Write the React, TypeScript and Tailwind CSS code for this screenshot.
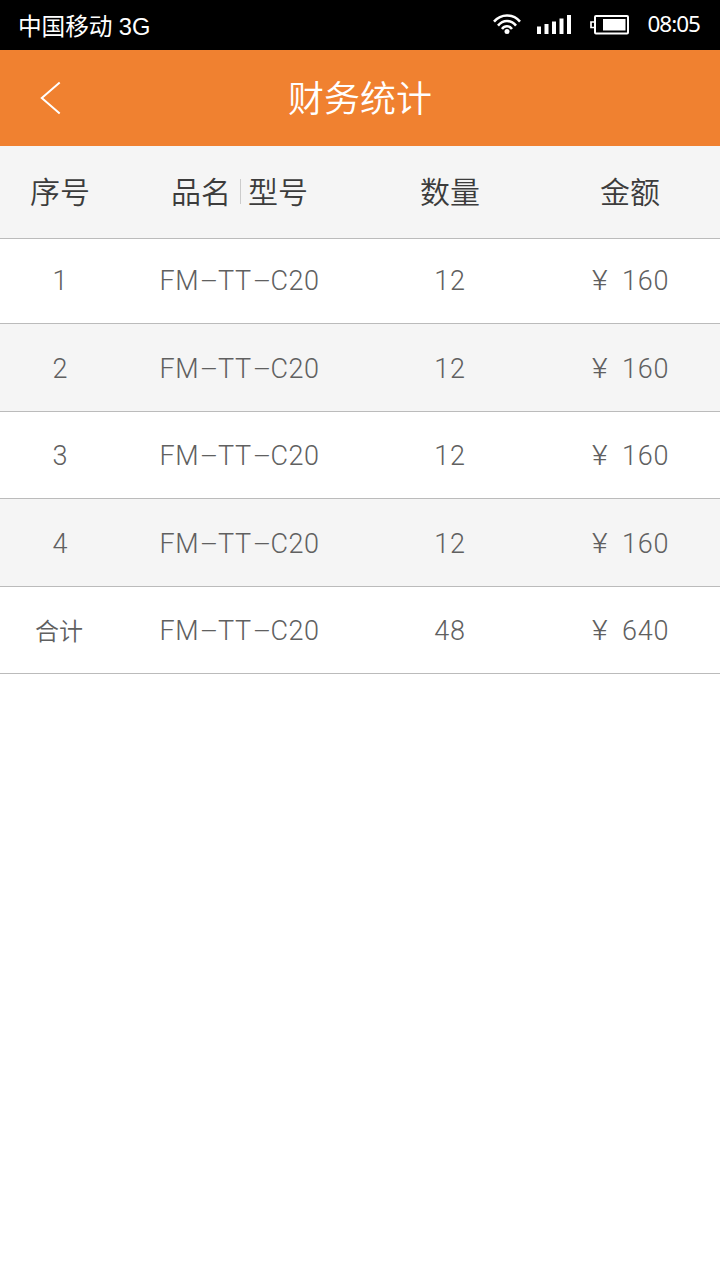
const rows = [
  { no: '1', model: 'FM-TT-C20', qty: '12', amount: '160', height: 'h-[85px]' },
  { no: '2', model: 'FM-TT-C20', qty: '12', amount: '160', height: 'h-[88px] bg-[#f5f5f5] pt-0.5' },
  { no: '3', model: 'FM-TT-C20', qty: '12', amount: '160', height: 'h-[87px] pt-0.5' },
  { no: '4', model: 'FM-TT-C20', qty: '12', amount: '160', height: 'h-[88px] bg-[#f5f5f5] pt-0.5' },
  { no: '合计', model: 'FM-TT-C20', qty: '48', amount: '640', height: 'h-[87px] pt-0.5' },
];

function StatusBar() {
  return (
    <div className="flex h-[50px] items-center justify-between bg-black pl-[18px] pr-5 text-white">
      <span className="pt-1 text-[23.7px] leading-[50px] tracking-[-0.1px] font-['Liberation_Sans','Noto_Sans_CJK_SC',sans-serif]">中国移动 3G</span>
      <div className="flex items-center">
        <svg className="mb-0.5 block" width="30" height="22" viewBox="0 0 30 22" fill="none" stroke="white" strokeWidth="2.5">
          <path d="M2 8.6C9 .4 21 .4 28 8.6" />
          <path d="M6 12.6C11 6.4 19 6.4 24 12.6" />
          <path d="M10 16C12.6 12.4 17.4 12.4 20 16" />
          <circle cx="15" cy="18.4" r="2.5" fill="white" stroke="none" />
        </svg>
        <svg className="mb-0.5 ml-[15px] block" width="34" height="20" viewBox="0 0 34 20" fill="white">
          <path d="M0 12.500h4V20H0zM7.500 10h4v10h-4zM15 7.500h4V20h-4zM22.500 4.500h4V20h-4zM30 1h4v19h-4z" />
        </svg>
        <svg className="ml-[19px] block" width="39" height="20" viewBox="0 0 39 20" fill="none" stroke="white" strokeWidth="2">
          <rect x="5" y="1" width="33" height="17.500" rx="1" />
          <path d="M4 7H1v5.500h3" strokeWidth="1.700" />
          <rect x="13" y="4" width="22.500" height="11.500" fill="white" stroke="none" />
        </svg>
        <span className="mb-0.5 ml-[18px] text-[22.5px] leading-[48px] tracking-[-1px] font-['Noto_Sans',sans-serif]">08:05</span>
      </div>
    </div>
  );
}

function NavBar() {
  return (
    <div className="grid h-24 grid-cols-[100px_1fr_100px] items-center bg-[#f08130] text-white">
      <svg className="ml-10 block" width="22" height="34" viewBox="0 0 22 34" fill="none" stroke="white" strokeWidth="2">
        <path d="M19.700 1.500L1.800 17l17.900 15.500" />
      </svg>
      <h1 className="pb-1 text-center text-[36px] leading-[48px] font-[350] font-['Noto_Sans_CJK_SC',sans-serif]">财务统计</h1>
    </div>
  );
}

function Model({ code }: { code: string }) {
  return (
    <span className="-ml-px tracking-[0.5px]">
      {code.split('').map((ch, i) =>
        ch === '-' ? (
          <span key={i} className="-mr-px inline-block w-[20px] -translate-y-px scale-x-[2.2] text-center tracking-normal">-</span>
        ) : (
          ch
        ),
      )}
    </span>
  );
}

export default function App() {
  return (
    <div className="flex h-[1280px] w-[720px] flex-col bg-white">
      <StatusBar />
      <NavBar />
      <div className="grid h-[93px] grid-cols-[120px_240px_180px_180px] items-center border-b border-[#bbbbbb] bg-[#f5f5f5] pb-[5px] text-center text-[30px] leading-[44px] font-[350] text-[#3c3c3c] font-['Noto_Sans_CJK_SC',sans-serif]">
        <span>序号</span>
        <span className="flex items-center justify-center pr-px">
          品名
          <i className="ml-[9px] mr-[7px] mt-1 h-[25px] w-px bg-[#cccccc]" />
          型号
        </span>
        <span>数量</span>
        <span>金额</span>
      </div>
      {rows.map((row) => (
        <div
          key={row.no}
          className={`grid grid-cols-[120px_240px_180px_180px] items-center border-b border-[#bbbbbb] text-center text-[27px] leading-[40px] tracking-[0.8px] font-[330] text-[#606060] font-['Roboto','Noto_Sans_CJK_SC',sans-serif] ${row.height}`}
        >
          {row.no === '合计' ? (
            <span className="pr-0.5 pb-0.5 text-[24px] tracking-normal font-[350] font-['Noto_Sans_CJK_SC',sans-serif]">{row.no}</span>
          ) : (
            <span className="pl-px">{row.no}</span>
          )}
          <Model code={row.model} />
          <span>{row.qty}</span>
          <span className="pl-0.5">
            <span className="mr-[7px] inline-block scale-x-[1.12]">¥</span> {row.amount}
          </span>
        </div>
      ))}
    </div>
  );
}
